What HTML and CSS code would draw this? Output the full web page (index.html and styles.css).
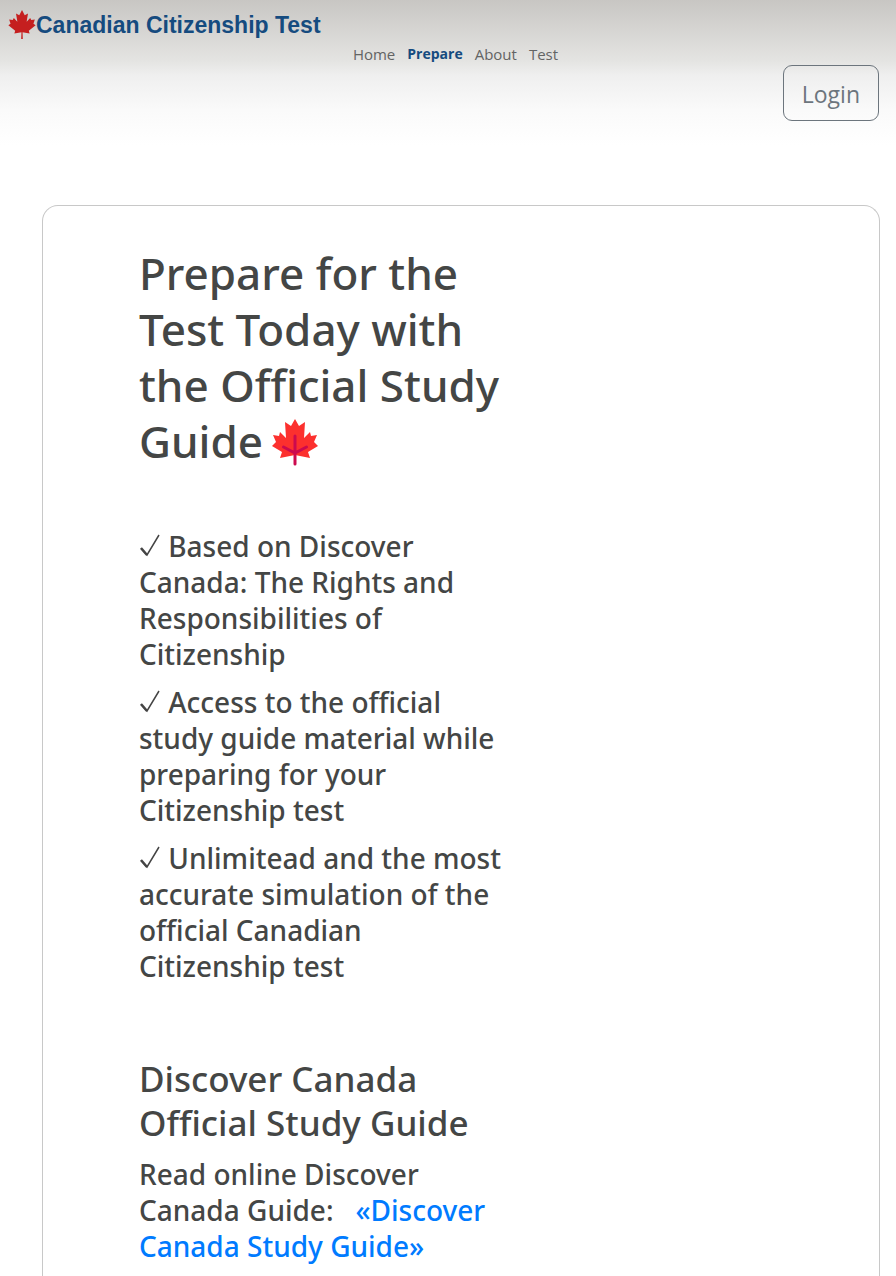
FILE: index.html
```html
<!DOCTYPE html>
<html lang="en">
<head>
<meta charset="utf-8">
<meta name="viewport" content="width=device-width, initial-scale=1">
<title>Canadian Citizenship Test</title>
<link rel="stylesheet" href="styles.css">
</head>
<body>
<header class="header">
  <a class="brand" href="#">
    <svg class="brand-leaf" viewBox="0 0 100 110" aria-hidden="true"><path fill="#c51f1f" d="M50 0 60 19 72 13 67 43 80 29 84 37 97 35 92 50 100 56 75 76 78 86 52 82 53 106 47 106 48 82 22 86 25 76 0 56 8 50 3 35 16 37 20 29 33 43 28 13 40 19Z"/></svg>
    <span>Canadian Citizenship Test</span>
  </a>
  <nav class="nav">
    <a href="#">Home</a>
    <a class="active" href="#">Prepare</a>
    <a href="#">About</a>
    <a href="#">Test</a>
  </nav>
  <button class="login" type="button">Login</button>
</header>
<main class="card">
  <div class="content">
    <h1 class="title">Prepare for the Test Today with the Official Study Guide<svg class="title-leaf" viewBox="0 0 46 48" aria-hidden="true"><path fill="#fc302e" d="M23 1 27 8 33 4 32 20 38 14 39 18 45 17 42 24 46 28 36 34 38 40 23 37 8 40 10 34 0 28 4 24 1 17 7 18 8 14 14 20 13 4 19 8Z"/><path fill="none" stroke="#cc0a4f" stroke-width="3" stroke-linecap="round" d="M23 18V46M11.500 29 23 35 34.500 29"/></svg></h1>
    <ul class="features">
      <li><svg class="check" viewBox="0 0 22 24" aria-hidden="true"><path fill="none" stroke="#444" stroke-width="1.500" d="M2 15.500 8 22 20 2"/><path fill="none" stroke="#444" stroke-width="2.500" d="M2 15 8 22"/></svg> Based on Discover Canada: The Rights and Responsibilities of Citizenship</li>
      <li><svg class="check" viewBox="0 0 22 24" aria-hidden="true"><path fill="none" stroke="#444" stroke-width="1.500" d="M2 15.500 8 22 20 2"/><path fill="none" stroke="#444" stroke-width="2.500" d="M2 15 8 22"/></svg> Access to the official study guide material while preparing for your Citizenship test</li>
      <li><svg class="check" viewBox="0 0 22 24" aria-hidden="true"><path fill="none" stroke="#444" stroke-width="1.500" d="M2 15.500 8 22 20 2"/><path fill="none" stroke="#444" stroke-width="2.500" d="M2 15 8 22"/></svg> Unlimitead and the most accurate simulation of the official Canadian Citizenship test</li>
    </ul>
    <h2 class="subtitle">Discover Canada Official Study Guide</h2>
    <p class="read">Read online Discover Canada Guide: &nbsp; <a href="#">«Discover Canada Study Guide»</a></p>
  </div>
</main>
</body>
</html>
```
FILE: styles.css
```css
* { box-sizing: border-box; }
body {
  display: flex;
  flex-direction: column;
  min-height: 100vh;
  margin: 0;
  color: #444645;
  background: #fff;
  font-family: "Noto Sans", "Open Sans", sans-serif;
}
a { text-decoration: none; }
.header {
  display: flex;
  flex-direction: column;
  padding: 8px 17px 24px 8px;
  background: linear-gradient(#c8c6c3, #e4e4e2 42%, #efefef 52%, #fafafa 76%, #fff);
}
.brand {
  display: flex;
  align-items: center;
  align-self: flex-start;
  height: 34px;
  color: #154b7f;
  font: bold 23px/34px "Liberation Sans", Arial, sans-serif;
}
.brand-leaf { width: 28px; height: 30px; }
.nav {
  display: flex;
  justify-content: center;
  gap: 12px;
  padding: 1px 0 0 24px;
  font-family: "Open Sans", sans-serif;
  font-size: 15px;
  line-height: 22px;
}
.nav a { color: #636464; }
.nav .active { color: #154b7f; font-size: 14px; font-weight: 700; }
.login {
  align-self: flex-end;
  height: 56px;
  padding: 2px 18px 0;
  border: 1px solid #6c757d;
  border-radius: 9px;
  background: transparent;
  color: #6c757d;
  font: 23px "Open Sans", sans-serif;
}
.card {
  flex: 1;
  margin: 60px 16px 0 42px;
  padding: 39px 96px 0;
  border: 1px solid #c8c8c8;
  border-bottom: 0;
  border-radius: 16px 16px 0 0;
}
.content { max-width: 374px; }
.title {
  margin: 0 0 59px;
  font-size: 44px;
  line-height: 56px;
  font-weight: 500;
}
.title-leaf { width: 46px; height: 48px; margin-left: 9px; vertical-align: -8px; }
.features {
  margin: 0;
  padding: 0;
  list-style: none;
  font-size: 28px;
  line-height: 36px;
  font-weight: 500;
}
.features li { margin-bottom: 12px; }
.check { width: 22px; height: 24px; }
.subtitle {
  margin: 73px 0 11px;
  font-size: 35px;
  line-height: 44px;
  font-weight: 500;
}
.read {
  margin: 0;
  padding-bottom: 10px;
  font-size: 28px;
  line-height: 36px;
  font-weight: 500;
}
.read a { color: #007bff; }
```
